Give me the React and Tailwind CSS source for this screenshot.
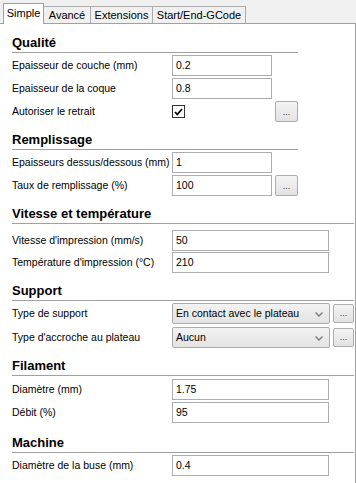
import React from 'react';

const Dots = ({ small }) => (
  <div
    className={
      (small ? 'w-[21px] h-[19px]' : 'w-[23px] h-[21px]') +
      ' flex items-end justify-center pb-[4px] border border-[#acacac] rounded-[2px] bg-linear-to-b from-[#f4f4f4] to-[#e2e2e2] text-[9px] leading-none text-[#333]'
    }
  >
    ...
  </div>
);

const Input = ({ value, wide }) => (
  <div
    className={
      (wide ? 'w-[157px]' : 'w-[100px]') +
      ' h-[21px] border border-[#abadb3] bg-white pl-[3px] flex items-center leading-none'
    }
  >
    {value}
  </div>
);

const Select = ({ value }) => (
  <div className="w-[158px] h-[21px] border border-[#acacac] rounded-[2px] bg-linear-to-b from-[#f2f2f2] to-[#e3e3e3] pl-[3px] pr-[6px] flex items-center justify-between leading-none">
    <span>{value}</span>
    <svg width="8" height="5" viewBox="0 0 8 5" className="mt-[1px]">
      <path d="M0.5 0.5 L4 4 L7.5 0.5" fill="none" stroke="#777" strokeWidth="1.3" />
    </svg>
  </div>
);

const Check = () => (
  <div className="w-[13px] h-[13px] border border-[#333] bg-white flex items-center justify-center">
    <svg width="9" height="8" viewBox="0 0 9 8">
      <path d="M1 4 L3.3 6.5 L8 1" fill="none" stroke="#000" strokeWidth="1.8" />
    </svg>
  </div>
);

const Row = ({ label, children }) => (
  <div className="h-[21px] flex items-center">
    <div className="w-[160px] shrink-0 whitespace-nowrap">{label}</div>
    <div className="flex items-center gap-[3px]">{children}</div>
  </div>
);

const Heading = ({ title, className }) => (
  <div className={'text-[13px] font-bold leading-[16px] pb-[1px] border-b border-[#a0a0a0] ' + className}>
    {title}
  </div>
);

export default function App() {
  return (
    <div className="w-[356px] h-[483px] overflow-hidden bg-[#f0f0f0] font-['Liberation_Sans',sans-serif] text-[10.5px] text-black flex flex-col">
      <div className="h-[23px] flex items-end pl-[3px] shrink-0 text-[11px]">
        <div className="w-[41px] h-[21px] -mb-px relative z-10 bg-white border-l border-t border-r border-[#a0a0a0] flex items-center justify-center pb-[2px]">
          Simple
        </div>
        <div className="w-[47px] h-[17px] border-t border-r border-[#adadad] flex items-center justify-center">
          Avancé
        </div>
        <div className="w-[62px] h-[17px] border-t border-r border-[#adadad] flex items-center justify-center">
          Extensions
        </div>
        <div className="w-[93px] h-[17px] border-t border-r border-[#adadad] flex items-center justify-center">
          Start/End-GCode
        </div>
      </div>

      <div className="flex-1 bg-white border-t border-r border-[#a0a0a0] pl-[12px] pr-px">
        <div className="w-[286px]">
          <Heading title="Qualité" className="mt-[11px]" />
          <div className="mt-[2px] flex flex-col gap-[2px]">
            <Row label="Epaisseur de couche (mm)">
              <Input value="0.2" />
            </Row>
            <Row label="Epaisseur de la coque">
              <Input value="0.8" />
            </Row>
            <Row label="Autoriser le retrait">
              <div className="w-[100px]">
                <Check />
              </div>
              <Dots />
            </Row>
          </div>

          <Heading title="Remplissage" className="mt-[10px]" />
          <div className="mt-[2px] flex flex-col gap-[2px]">
            <Row label="Epaisseurs dessus/dessous (mm)">
              <Input value="1" />
            </Row>
            <Row label="Taux de remplissage (%)">
              <Input value="100" />
              <Dots />
            </Row>
          </div>
        </div>

        <Heading title="Vitesse et température" className="mt-[10px]" />
        <div className="mt-[6px] flex flex-col gap-px">
          <Row label="Vitesse d'impression (mm/s)">
            <Input value="50" wide />
          </Row>
          <Row label="Température d'impression (°C)">
            <Input value="210" wide />
          </Row>
        </div>

        <Heading title="Support" className="mt-[10px]" />
        <div className="mt-[2px] flex flex-col gap-[3px]">
          <Row label="Type de support">
            <Select value="En contact avec le plateau" />
            <Dots small />
          </Row>
          <Row label="Type d'accroche au plateau">
            <Select value="Aucun" />
            <Dots small />
          </Row>
        </div>

        <Heading title="Filament" className="mt-[10px]" />
        <div className="mt-[3px] flex flex-col gap-[2px]">
          <Row label="Diamètre (mm)">
            <Input value="1.75" wide />
          </Row>
          <Row label="Débit (%)">
            <Input value="95" wide />
          </Row>
        </div>

        <Heading title="Machine" className="mt-[12px]" />
        <div className="mt-[2px] flex flex-col gap-[2px]">
          <Row label="Diamètre de la buse (mm)">
            <Input value="0.4" wide />
          </Row>
        </div>
      </div>
    </div>
  );
}
